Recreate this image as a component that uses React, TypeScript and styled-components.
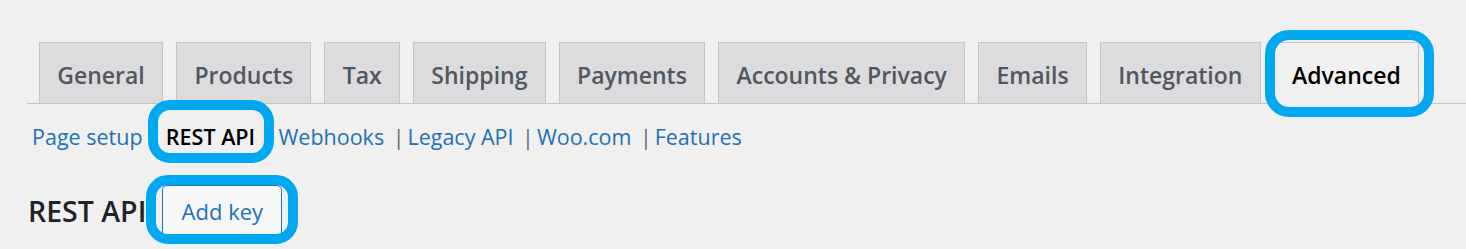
import styled, { createGlobalStyle } from "styled-components";

const GlobalStyle = createGlobalStyle`
  body {
    margin: 0;
    background: #f0f0f1;
    font-family: "Open Sans", "Noto Sans", sans-serif;
  }
`;

const Page = styled.div`
  padding: 42px 0 12px 27px;
`;

const TabBar = styled.nav`
  display: flex;
  align-items: flex-end;
  gap: 13px;
  padding-left: 12px;
  border-bottom: 1px solid #c3c4c7;
`;

const Tab = styled.a<{ $active?: boolean }>`
  display: flex;
  align-items: center;
  box-sizing: border-box;
  height: 62px;
  margin-bottom: -1px;
  padding: 3px 17.3px 0;
  border: 1px solid #c3c4c7;
  border-bottom: 1px solid ${(p) => (p.$active ? "#f0f0f1" : "#c3c4c7")};
  background: ${(p) => (p.$active ? "#f0f0f1" : "#dcdcde")};
  color: ${(p) => (p.$active ? "#000" : "#50575e")};
  font-size: 23px;
  font-weight: 600;
  white-space: nowrap;
  cursor: pointer;
`;

// blue annotation ring drawn over the highlighted element
const Callout = styled.span<{ $t: number; $r: number; $b: number; $l: number; $radius?: number }>`
  position: relative;
  display: inline-flex;

  &::after {
    content: "";
    position: absolute;
    top: ${(p) => p.$t}px;
    right: ${(p) => p.$r}px;
    bottom: ${(p) => p.$b}px;
    left: ${(p) => p.$l}px;
    border: 10px solid #00a8ef;
    border-radius: ${(p) => p.$radius ?? 24}px;
    pointer-events: none;
  }
`;

const SubNav = styled.ul`
  display: flex;
  align-items: baseline;
  list-style: none;
  margin: 16px 0 0;
  padding: 0 0 0 5px;
  font-size: 21.5px;
  line-height: 34px;
`;

const SubItem = styled.li`
  display: flex;
  align-items: baseline;
`;

const SubLink = styled.a<{ $current?: boolean }>`
  color: ${(p) => (p.$current ? "#000" : "#2271b1")};
  font-weight: ${(p) => (p.$current ? 600 : 400)};
  text-decoration: none;
  cursor: pointer;
`;

const Sep = styled.span`
  color: #646970;
  margin: 0 3px 0 8.5px;
`;

const HeadRow = styled.div`
  display: flex;
  align-items: center;
  margin-top: 31px;
  padding-left: 1px;
`;

const Heading = styled.h2`
  margin: 0 16px 0 0;
  font-size: 28.5px;
  font-weight: 600;
  color: #1d2327;
`;

const Button = styled.button`
  box-sizing: border-box;
  height: 52px;
  width: 120px;
  padding: 0;
  border: 1px solid #2271b1;
  border-radius: 5px;
  background: #f6f7f7;
  color: #2271b1;
  font-family: inherit;
  font-size: 22px;
  cursor: pointer;
`;

const tabs = [
  "General",
  "Products",
  "Tax",
  "Shipping",
  "Payments",
  "Accounts & Privacy",
  "Emails",
  "Integration",
];

const sections = ["Page setup", "REST API", "Webhooks", "Legacy API", "Woo.com", "Features"];

export default function App() {
  return (
    <Page>
      <GlobalStyle />
      <TabBar>
        {tabs.map((t) => (
          <Tab key={t}>{t}</Tab>
        ))}
        <Callout $t={-12} $r={-15} $b={-14} $l={-9}>
          <Tab $active>Advanced</Tab>
        </Callout>
      </TabBar>

      <SubNav>
        {sections.map((s, i) => {
          const current = s === "REST API";
          return (
            <SubItem key={s}>
              {current ? (
                <Callout $t={-20} $r={-19} $b={-9} $l={-18} $radius={22}>
                  <SubLink $current>{s}</SubLink>
                </Callout>
              ) : (
                <SubLink>{s}</SubLink>
              )}
              {i < sections.length - 1 && <Sep>|</Sep>}
            </SubItem>
          );
        })}
      </SubNav>

      <HeadRow>
        <Heading>REST API</Heading>
        <Callout $t={-10} $r={-16} $b={-7} $l={-16} $radius={22}>
          <Button>Add key</Button>
        </Callout>
      </HeadRow>
    </Page>
  );
}
